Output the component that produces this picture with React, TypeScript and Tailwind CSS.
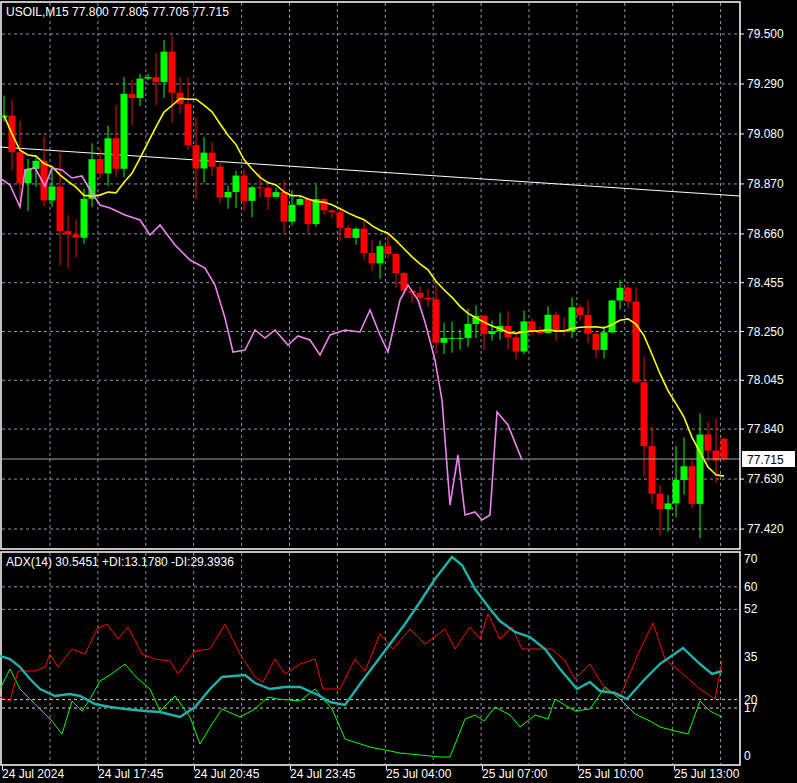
import React from "react";

// ── Price → pixel helpers ─────────────────────────────────────────
const py = (p: number) => 34 + (79.5 - p) * 238;
const ay = (v: number) => 757 - 552 - v * 2.82; // local y inside ADX panel

const KEYS: [number, number][] = [
  [0, 79.2], [20, 79.0], [50, 78.85], [80, 78.72], [100, 78.9], [120, 79.1],
  [150, 79.35], [180, 79.22], [200, 78.95], [220, 78.88], [260, 78.86], [280, 78.76],
  [330, 78.76], [360, 78.65], [400, 78.5], [420, 78.4], [440, 78.22], [480, 78.25],
  [530, 78.22], [570, 78.3], [600, 78.22], [615, 78.45], [630, 78.3], [645, 77.85],
  [660, 77.55], [680, 77.5], [700, 77.75], [712, 77.85], [725, 77.72],
];

function lerp(x: number) {
  for (let i = 1; i < KEYS.length; i++) {
    if (x <= KEYS[i][0]) {
      const [x0, y0] = KEYS[i - 1];
      const [x1, y1] = KEYS[i];
      return y0 + ((y1 - y0) * (x - x0)) / (x1 - x0);
    }
  }
  return KEYS[KEYS.length - 1][1];
}

let seed = 7;
const rnd = () => {
  seed = (seed * 9301 + 49297) % 233280;
  return seed / 233280;
};

type Candle = { x: number; o: number; c: number; h: number; l: number };
const candles: Candle[] = [];
let prev = 79.15;
for (let x = 4; x <= 724; x += 8) {
  const vol = x < 200 ? 0.3 : x > 630 ? 0.3 : 0.14;
  const c = lerp(x) + (rnd() - 0.5) * vol;
  const o = prev;
  const h = Math.max(o, c) + rnd() * vol * 0.5;
  const l = Math.min(o, c) - rnd() * vol * 0.5;
  candles.push({ x, o, c, h, l });
  prev = c;
}
candles[candles.length - 1] = { x: 724, o: 77.8, c: 77.715, h: 77.805, l: 77.705 };

const ma: string = candles
  .map((cd, i) => {
    const s = candles.slice(Math.max(0, i - 9), i + 1);
    const avg = s.reduce((a, b) => a + b.c, 0) / s.length;
    return `${cd.x},${py(avg).toFixed(1)}`;
  })
  .join(" ");

const PINK = "0,178 10,185 20,207 25,170 35,168 45,186 52,168 62,170 72,178 82,176 90,190 100,205 110,208 125,215 140,220 150,235 160,225 175,245 190,260 205,268 215,285 225,318 233,352 245,350 255,330 265,338 275,330 288,345 298,336 310,340 320,355 330,335 345,330 360,332 370,310 380,335 388,352 400,300 408,285 418,300 425,322 435,360 442,400 450,505 458,455 465,515 475,512 482,520 490,515 497,412 508,425 522,460";

const TEAL = "0,657 10,660 20,668 30,680 40,690 55,697 70,695 80,697 95,705 110,708 125,710 145,712 160,713 180,718 195,708 210,690 222,678 245,676 255,684 270,690 285,688 300,688 318,696 330,703 345,706 360,685 375,665 390,645 405,625 420,603 435,580 452,558 462,566 475,590 490,610 500,622 515,633 530,638 545,650 560,670 577,690 590,683 600,692 615,694 627,700 645,680 660,665 683,649 700,665 712,675 722,672";
const RED = "0,698 10,702 18,672 35,672 45,668 50,655 58,668 72,650 85,655 97,630 107,625 118,640 128,628 142,655 155,660 170,662 178,675 195,652 210,650 225,625 240,655 255,678 263,683 275,660 285,675 300,665 315,660 323,690 340,690 355,660 365,672 380,635 393,650 410,630 425,645 445,630 455,650 470,628 480,640 488,615 500,640 512,628 522,650 540,650 552,650 565,662 575,680 590,665 605,690 620,698 638,655 653,624 665,660 683,675 700,690 715,700 722,662";
const GREEN = "0,690 10,670 20,690 40,710 52,722 62,735 72,702 82,712 90,700 100,682 110,676 125,665 136,678 150,690 160,712 175,697 190,718 200,745 212,725 222,710 240,718 255,710 268,698 278,700 300,702 315,690 332,710 345,740 370,748 400,754 420,756 440,758 450,758 465,720 475,716 484,722 495,708 510,716 520,728 535,716 548,720 555,700 575,712 590,710 605,688 620,700 635,715 650,722 660,728 675,732 688,735 700,702 710,712 722,718";

const shift = (pts: string, dy: number) =>
  pts.split(" ").map((p) => { const [x, y] = p.split(",").map(Number); return `${x},${y - dy}`; }).join(" ");

const VGRID = Array.from({ length: 15 }, (_, i) => 50 + i * 47.9);
const PRICES = ["79.500", "79.290", "79.080", "78.870", "78.660", "78.455", "78.250", "78.045", "77.840", "77.630", "77.420"];
const TIMES = ["24 Jul 2024", "24 Jul 17:45", "24 Jul 20:45", "24 Jul 23:45", "25 Jul 04:00", "25 Jul 07:00", "25 Jul 10:00", "25 Jul 13:00"];

export default function App() {
  return (
    <div className="w-[797px] h-[783px] bg-black text-white text-[12px] overflow-hidden"
      style={{ fontFamily: "'Liberation Sans', Arial, sans-serif" }}>
      {/* ── Main price panel ─────────────── */}
      <svg width="797" height="551" className="block">
        <rect x="1" y="2" width="739" height="547" fill="none" stroke="#fff" strokeWidth="1.5" />
        {VGRID.map((x) => (
          <line key={x} x1={x} y1="3" x2={x} y2="548" stroke="#8a96a8" strokeDasharray="3 3" />
        ))}
        {PRICES.map((p) => (
          <g key={p}>
            <line x1="2" y1={py(+p)} x2="739" y2={py(+p)} stroke="#8a96a8" strokeDasharray="3 3" />
            <line x1="740" y1={py(+p)} x2="744" y2={py(+p)} stroke="#fff" />
            <text x="747" y={py(+p) + 4} fill="#fff" fontSize="12">{p}</text>
          </g>
        ))}
        <line x1="0" y1="147" x2="740" y2="196" stroke="#fff" strokeWidth="1" />
        {candles.map((cd) => {
          const up = cd.c >= cd.o;
          const col = up ? "#00ff00" : "#ff0000";
          const top = py(Math.max(cd.o, cd.c));
          const h = Math.max(1, py(Math.min(cd.o, cd.c)) - top);
          return (
            <g key={cd.x}>
              <line x1={cd.x} y1={py(cd.h)} x2={cd.x} y2={py(cd.l)} stroke={col} />
              <rect x={cd.x - 3.5} y={top} width="7" height={h} fill={col} />
            </g>
          );
        })}
        <polyline points={ma} fill="none" stroke="#ffff00" strokeWidth="1.6" />
        <polyline points={PINK} fill="none" stroke="#ee82ee" strokeWidth="1.6" />
        <line x1="2" y1="459" x2="739" y2="459" stroke="#a0a0a0" />
        <rect x="742" y="451" width="53" height="16" fill="#fff" />
        <text x="747" y="464" fill="#000" fontSize="12">77.715</text>
        <text x="6" y="16" fill="#fff" fontSize="12">USOIL,M15  77.800 77.805 77.705 77.715</text>
      </svg>

      {/* ── ADX panel ────────────────────── */}
      <svg width="797" height="215" className="block">
        <rect x="1" y="1" width="739" height="213" fill="none" stroke="#fff" strokeWidth="1.5" />
        {VGRID.map((x) => (
          <line key={x} x1={x} y1="2" x2={x} y2="213" stroke="#8a96a8" strokeDasharray="3 3" />
        ))}
        {[60, 52].map((v) => (
          <line key={v} x1="2" y1={ay(v)} x2="739" y2={ay(v)} stroke="#8a96a8" strokeDasharray="3 3" />
        ))}
        {[20, 17].map((v) => (
          <line key={v} x1="2" y1={ay(v)} x2="739" y2={ay(v)} stroke="#d0d0d0" strokeDasharray="3 3" />
        ))}
        {[70, 60, 52, 35, 20, 17, 0].map((v) => (
          <text key={v} x="744" y={ay(v) + 4} fill="#fff" fontSize="12">{v}</text>
        ))}
        <polyline points={shift(GREEN, 552)} fill="none" stroke="#00ff00" strokeWidth="1" />
        <polyline points={shift(RED, 552)} fill="none" stroke="#ff0000" strokeWidth="1" />
        <polyline points={shift(TEAL, 552)} fill="none" stroke="#20b2aa" strokeWidth="2.4" />
        <text x="6" y="15" fill="#fff" fontSize="12">ADX(14) 30.5451 +DI:13.1780 -DI:29.3936</text>
      </svg>

      {/* ── Time axis ────────────────────── */}
      <div className="flex h-[17px]">
        {TIMES.map((t) => (
          <div key={t} className="w-[96px] relative pl-[2px] leading-[17px] whitespace-nowrap">
            <span className="absolute left-[2px] top-0 h-[4px] w-px bg-white" />
            {t}
          </div>
        ))}
      </div>
    </div>
  );
}
